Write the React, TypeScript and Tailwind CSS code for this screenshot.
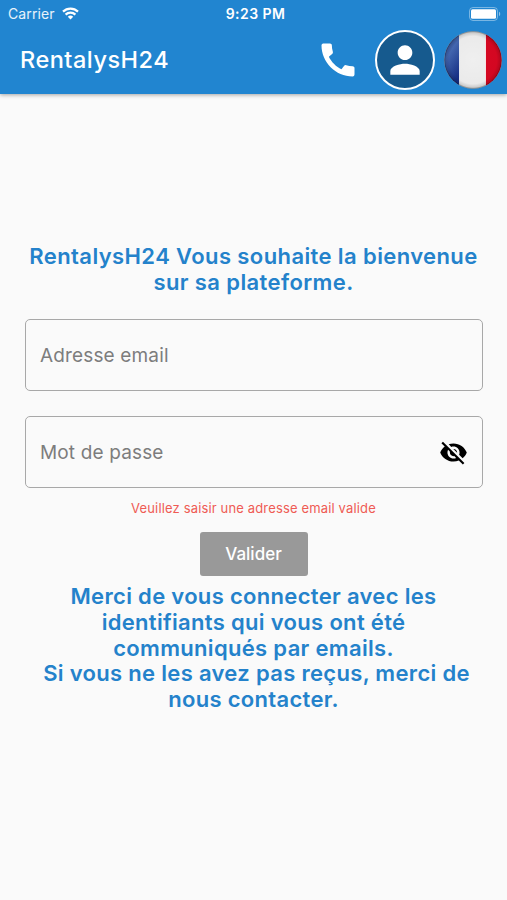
function StatusBar() {
  return (
    <div className="flex h-[27px] items-center justify-between pl-[8px] pr-[6px] text-white">
      <div className="flex w-[200px] items-center gap-[7px]">
        <span className="text-[14px] leading-[27px] tracking-[0.1px] text-white/90">Carrier</span>
        <svg width="17" height="13" viewBox="0 0 17 13" fill="none" stroke="currentColor" strokeWidth="2.2">
          <path d="M1 4.6a10.8 10.8 0 0 1 15 0" />
          <path d="M3.6 7.6a7 7 0 0 1 9.8 0" />
          <path d="M8.5 12.6 5.8 9.8a3.9 3.9 0 0 1 5.4 0Z" fill="currentColor" stroke="none" />
        </svg>
      </div>
      <span className="text-[14px] leading-[27px] font-semibold tracking-[0.45px]">9:23 PM</span>
      <div className="flex w-[198px] justify-end">
        <svg width="32" height="14" viewBox="0 0 32 14">
          <rect x="0.5" y="0.5" width="28" height="13" rx="3.5" fill="none" stroke="#fff" strokeOpacity="0.4" />
          <rect x="2" y="2.3" width="25" height="9.4" rx="1.5" fill="#fff" />
          <path d="M30 4.8c1.6.6 1.6 3.8 0 4.4Z" fill="#fff" fillOpacity="0.5" />
        </svg>
      </div>
    </div>
  );
}

function FrenchFlag() {
  return (
    <svg className="ml-[9px]" width="58" height="58" viewBox="0 0 58 58">
      <defs>
        <clipPath id="disc"><circle cx="29" cy="29" r="28.7" /></clipPath>
        <radialGradient id="shade" cx="0.5" cy="0.5" r="0.5">
          <stop offset="0" stopColor="#000" stopOpacity="0" />
          <stop offset="0.82" stopColor="#000" stopOpacity="0.02" />
          <stop offset="0.94" stopColor="#000" stopOpacity="0.15" />
          <stop offset="1" stopColor="#000" stopOpacity="0.55" />
        </radialGradient>
        <linearGradient id="blue" x1="0" y1="0" x2="0.4" y2="1">
          <stop offset="0" stopColor="#2c4b98" />
          <stop offset="0.45" stopColor="#4468b2" />
          <stop offset="1" stopColor="#152f86" />
        </linearGradient>
      </defs>
      <g clipPath="url(#disc)">
        <rect width="58" height="58" fill="#efefef" />
        <rect width="15.5" height="58" fill="url(#blue)" />
        <rect x="41.5" width="17" height="58" fill="#d80722" />
        <path d="M15.5 0V58M41.5 0V58" stroke="#fff" strokeWidth="0.8" />
        <rect width="58" height="58" fill="url(#shade)" />
      </g>
    </svg>
  );
}

function Header() {
  return (
    <header className="h-[94px] bg-[#2185d0] shadow-[0_1px_4px_rgba(0,0,0,0.35)]">
      <StatusBar />
      <div className="flex h-[65px] items-center pl-5 pr-[5px] text-white">
        <h1 className="flex-1 text-[23.5px] font-medium tracking-[0.5px]">RentalysH24</h1>
        <svg className="mr-[15px]" width="44" height="44" viewBox="0 0 24 24" fill="currentColor">
          <path d="M20.01 15.38c-1.23 0-2.42-.2-3.53-.56a.977.977 0 0 0-1.01.24l-1.57 1.97c-2.83-1.35-5.48-3.9-6.89-6.83l1.95-1.66c.27-.28.35-.67.24-1.02-.37-1.11-.56-2.3-.56-3.53 0-.54-.45-.99-.99-.99H4.19C3.65 3 3 3.24 3 3.99 3 13.28 10.73 21 20.01 21c.71 0 .99-.63.99-1.18v-3.45c0-.54-.45-.99-.99-.99z" />
        </svg>
        <div className="flex size-[60px] items-center justify-center rounded-full border-2 border-white bg-[#165a8e]">
          <svg width="44" height="44" viewBox="0 0 24 24" fill="currentColor" className="shrink-0">
            <path d="M12 12c2.21 0 4-1.79 4-4s-1.79-4-4-4-4 1.79-4 4 1.79 4 4 4zm0 2c-2.67 0-8 1.34-8 4v2h16v-2c0-2.66-5.33-4-8-4z" />
          </svg>
        </div>
        <FrenchFlag />
      </div>
    </header>
  );
}

function VisibilityOff() {
  return (
    <svg width="29" height="29" viewBox="0 0 24 24" fill="#000">
      <path d="M12 7c2.76 0 5 2.24 5 5 0 .65-.13 1.26-.36 1.83l2.92 2.92c1.51-1.26 2.7-2.89 3.43-4.75-1.73-4.39-6-7.5-11-7.5-1.4 0-2.74.25-3.98.7l2.16 2.16C10.74 7.13 11.35 7 12 7zM2 4.27l2.28 2.28.46.46C3.08 8.3 1.78 10.02 1 12c1.73 4.39 6 7.5 11 7.5 1.55 0 3.03-.3 4.38-.84l.42.42L19.73 22 21 20.73 3.27 3 2 4.27zM7.53 9.8l1.55 1.55c-.05.21-.08.43-.08.65 0 1.66 1.34 3 3 3 .22 0 .44-.03.65-.08l1.55 1.55c-.67.33-1.41.53-2.2.53-2.76 0-5-2.24-5-5 0-.79.2-1.53.53-2.2zm4.31-.78 3.15 3.15.02-.16c0-1.66-1.34-3-3-3l-.17.01z" />
    </svg>
  );
}

export default function App() {
  return (
    <div className="min-h-[900px] w-[507px] bg-[#fafafa] font-[Inter,sans-serif]">
      <Header />
      <main className="flex flex-col items-center pt-[150px]">
        <p className="text-center text-[22px] leading-[25.7px] font-semibold tracking-[0.4px] whitespace-nowrap text-[#2482cb]">
          RentalysH24 Vous souhaite la bienvenue<br />sur sa plateforme.
        </p>
        <div className="mt-[24px] flex h-[72px] w-[458px] items-center rounded-[5px] border-[1.5px] border-[#a8a8a8] px-[14.5px] pt-[2px] text-[19px] tracking-[0.15px] text-[#7d7d7d]">
          Adresse email
        </div>
        <div className="mt-[25px] flex h-[72px] w-[458px] items-center justify-between rounded-[5px] border-[1.5px] border-[#a8a8a8] pr-[14px] pl-[14.5px] text-[19px] tracking-[0.15px] text-[#7d7d7d]">
          <span className="pt-[2px]">Mot de passe</span>
          <VisibilityOff />
        </div>
        <p className="mt-[11px] text-[13px] leading-[18px] tracking-[0.15px] whitespace-nowrap text-[#ef5b54]">
          Veuillez saisir une adresse email valide
        </p>
        <button className="mt-[15px] h-[44px] w-[108px] rounded-[3px] bg-[#999999] text-[17px] font-medium text-white">
          Valider
        </button>
        <p className="mt-[8px] text-center text-[22px] leading-[25.6px] font-semibold tracking-[0.32px] whitespace-nowrap text-[#2482cb]">
          Merci de vous connecter avec les<br />identifiants qui vous ont été<br />communiqués par emails.<br />
          <span className="pl-[6px]">Si vous ne les avez pas reçus, merci de</span><br />nous contacter.
        </p>
      </main>
    </div>
  );
}
